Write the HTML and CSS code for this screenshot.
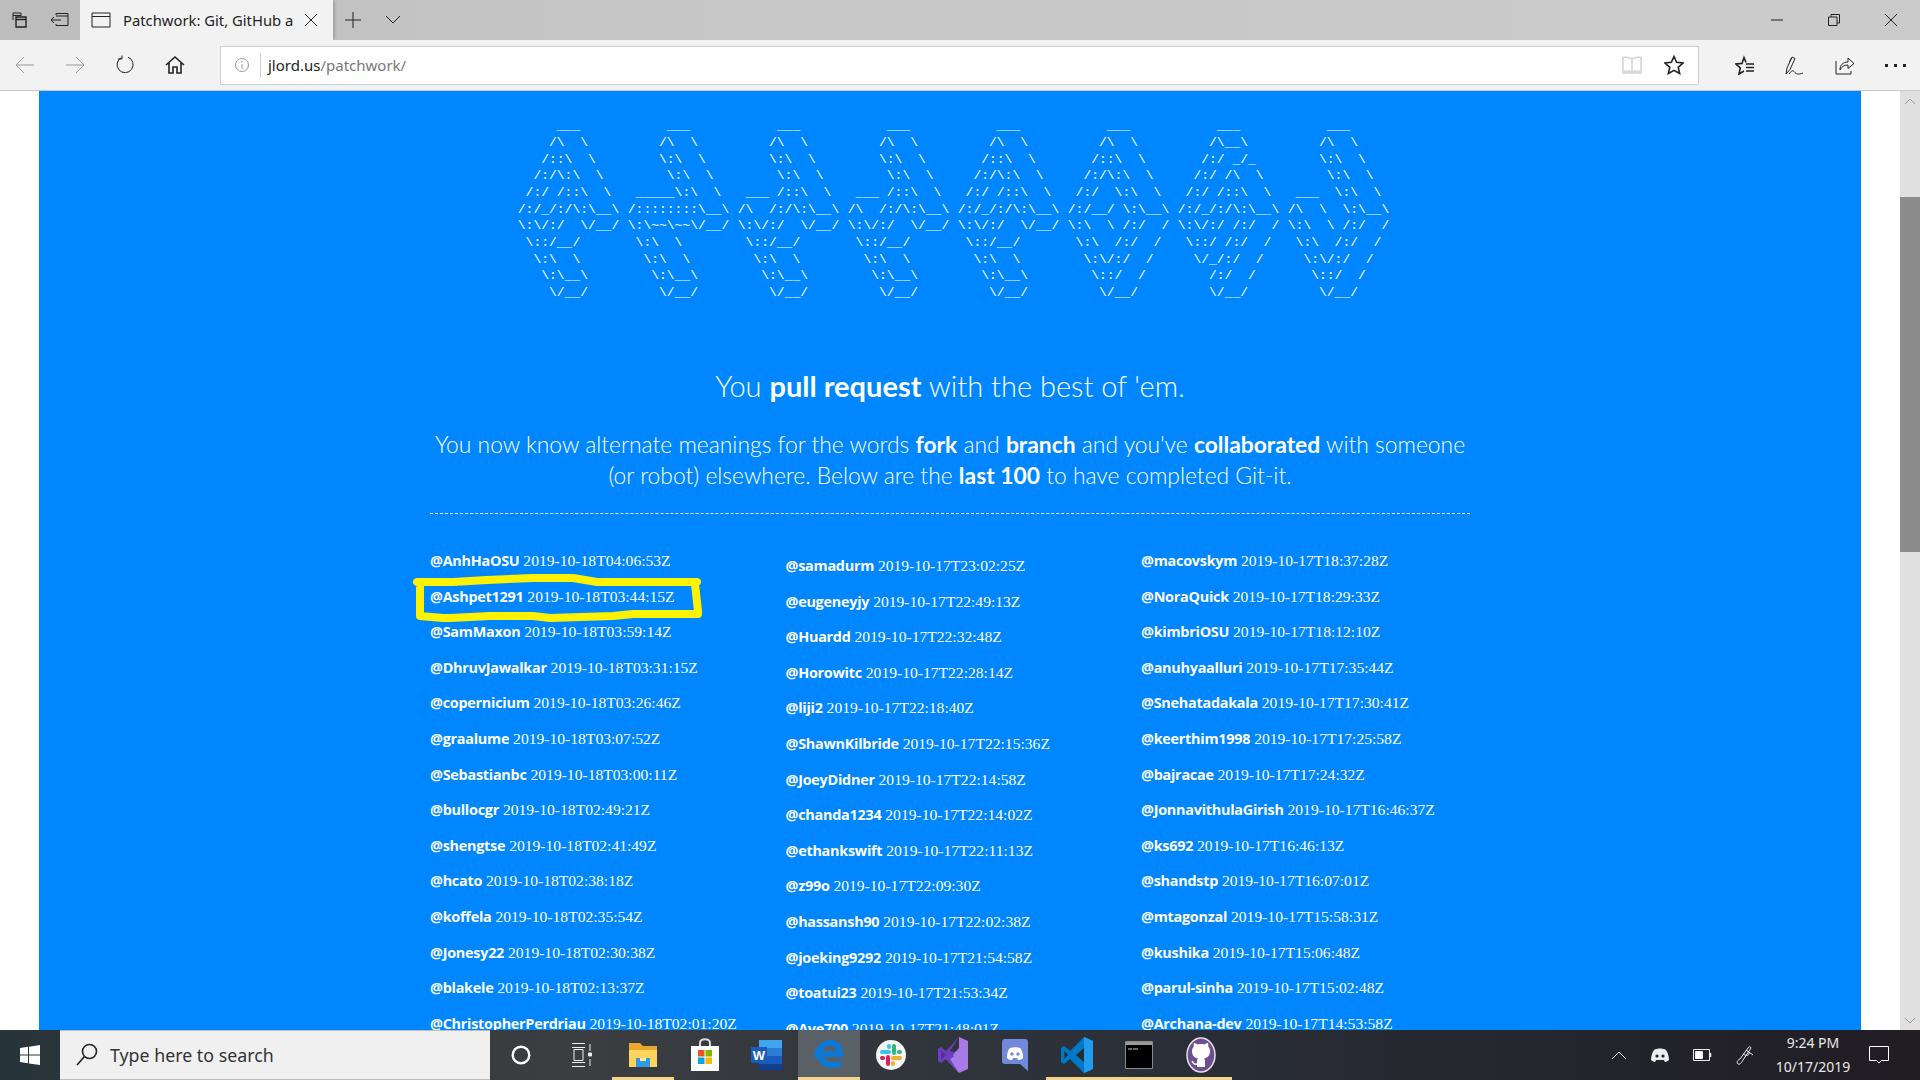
FILE: index.html
```html
<!DOCTYPE html>
<html lang="en">
<head>
    <meta charset="UTF-8">
    <title>Patchwork: Git, GitHub and you</title>
    <link rel="stylesheet" href="styles.css">
</head>
<body>
    <!-- browser chrome -->
    <div class="tabbar">
        <div class="tab-tools">
            <span class="tool"><svg width="20" height="20" viewBox="0 0 20 20" class="ic"><path d="M3 10V3h8v3M3 5.500h8"/><path d="M6 7h10v10H6zM6 9.500h10" stroke-width="1.4"/></svg></span>
            <span class="tool"><svg width="20" height="20" viewBox="0 0 20 20" class="ic"><path d="M6 5V3.500h12v12H6V14M6 6h12M1 10h10M4 7l-3 3 3 3"/></svg></span>
        </div>
        <div class="tab">
            <svg width="20" height="18" viewBox="0 0 20 18" class="ic"><path d="M1 2h18v14H1zM1 5.500h18"/></svg>
            <span class="tab-title">Patchwork: Git, GitHub a</span>
            <svg width="14" height="14" viewBox="0 0 14 14" class="ic tab-close"><path d="M1 1l12 12M13 1L1 13"/></svg>
        </div>
        <span class="tab-new"><svg width="16" height="16" viewBox="0 0 16 16" class="ic"><path d="M8 0v16M0 8h16"/></svg></span>
        <span class="tab-list"><svg width="16" height="10" viewBox="0 0 16 10" class="ic"><path d="M1 1l7 7 7-7"/></svg></span>
        <div class="win-btns">
            <svg width="12" height="2" viewBox="0 0 12 2" class="ic"><path d="M0 1h12"/></svg>
            <svg width="12" height="12" viewBox="0 0 12 12" class="ic"><path d="M.5 3h8.500v8.500H.5zM3 3V.5h8.500V9H9"/></svg>
            <svg width="12" height="12" viewBox="0 0 12 12" class="ic"><path d="M0 0l12 12M12 0L0 12"/></svg>
        </div>
    </div>
    <div class="toolbar">
        <span class="nav"><svg width="20" height="18" viewBox="0 0 20 18" class="ic dim"><path d="M19 9H1M9 1L1 9l8 8"/></svg></span>
        <span class="nav"><svg width="20" height="18" viewBox="0 0 20 18" class="ic dim"><path d="M1 9h18M11 1l8 8-8 8"/></svg></span>
        <span class="nav"><svg width="20" height="20" viewBox="0 0 20 20" class="ic"><path d="M6.500 2.500A8 8 0 1 0 13 2.200M7 .5v3.500H3"/></svg></span>
        <span class="nav"><svg width="20" height="20" viewBox="0 0 20 20" class="ic ic-bold"><path d="M1 10l9-8 9 8M4 8v10h4v-6h4v6h4V8"/></svg></span>
        <div class="address">
            <svg width="16" height="16" viewBox="0 0 16 16" class="ic dim info"><circle cx="8" cy="8" r="6.500"/><path d="M8 7v5M8 4v1.500"/></svg>
            <span class="addr-sep"></span>
            <span class="url">jlord.us<span class="url-path">/patchwork/</span></span>
            <svg width="20" height="20" viewBox="0 0 20 20" class="ic faint reader"><path d="M10 4C8 2.500 4 2 1 2.500V18h18V2.500C16 2 12 2.500 10 4zM10 4v13M1 17c3-1 7-1 9 0 2-1 6-1 9 0"/></svg>
            <svg width="20" height="20" viewBox="0 0 20 20" class="ic ic-bold star"><path d="M10 1.500l2.600 5.800 6.400.7-4.800 4.300 1.400 6.200L10 15.300l-5.600 3.200 1.400-6.200L1 8l6.400-.7z"/></svg>
        </div>
        <div class="tool-right">
            <span class="nav"><svg width="20" height="20" viewBox="0 0 20 20" class="ic ic-bold"><path d="M9 16l-5 3 1.300-6L1 9l6-.6L9 2.500l2 5M11 9h8M11 12.500h8M11 16h8"/></svg></span>
            <span class="nav"><svg width="20" height="20" viewBox="0 0 20 20" class="ic"><path d="M1 19l1-6L7 2l3 1.500-5 11zM6.500 3l-2 4M4 19c3-4 4-4 6-1.500s5 1.500 8 .5"/></svg></span>
            <span class="nav"><svg width="20" height="20" viewBox="0 0 20 20" class="ic"><path d="M1 6v13h15v-3M5 15c0-5 3-8 8-8V3l6 5.500-6 5V10c-4 0-6 1.500-8 5z"/></svg></span>
            <span class="nav dots"><i></i><i></i><i></i></span>
        </div>
    </div>

    <div class="viewport">
        <main class="page">
            <div class="art">
<pre>      ___
     /\  \
    /::\  \
   /:/\:\  \
  /:/ /::\  \
 /:/_/:/\:\__\
 \:\/:/  \/__/
  \::/__/
   \:\  \
    \:\__\
     \/__/</pre>
<pre>      ___
     /\  \
     \:\  \
      \:\  \
  _____\:\  \
 /::::::::\__\
 \:\~~\~~\/__/
  \:\  \
   \:\  \
    \:\__\
     \/__/</pre>
<pre>      ___
     /\  \
     \:\  \
      \:\  \
  ___ /::\  \
 /\  /:/\:\__\
 \:\/:/  \/__/
  \::/__/
   \:\  \
    \:\__\
     \/__/</pre>
<pre>      ___
     /\  \
     \:\  \
      \:\  \
  ___ /::\  \
 /\  /:/\:\__\
 \:\/:/  \/__/
  \::/__/
   \:\  \
    \:\__\
     \/__/</pre>
<pre>      ___
     /\  \
    /::\  \
   /:/\:\  \
  /:/ /::\  \
 /:/_/:/\:\__\
 \:\/:/  \/__/
  \::/__/
   \:\  \
    \:\__\
     \/__/</pre>
<pre>      ___
     /\  \
    /::\  \
   /:/\:\  \
  /:/  \:\  \
 /:/__/ \:\__\
 \:\  \ /:/  /
  \:\  /:/  /
   \:\/:/  /
    \::/  /
     \/__/</pre>
<pre>      ___
     /\__\
    /:/ _/_
   /:/ /\  \
  /:/ /::\  \
 /:/_/:/\:\__\
 \:\/:/ /:/  /
  \::/ /:/  /
   \/_/:/  /
     /:/  /
     \/__/</pre>
<pre>      ___
     /\  \
     \:\  \
      \:\  \
  ___  \:\  \
 /\  \  \:\__\
 \:\  \ /:/  /
  \:\  /:/  /
   \:\/:/  /
    \::/  /
     \/__/</pre>
            </div>

            <h2 class="lead">You <b>pull request</b> with the best of 'em.</h2>
            <p class="sub">You now know alternate meanings for the words <b>fork</b> and <b>branch</b> and you've <b>collaborated</b> with someone<br>(or robot) elsewhere. Below are the <b>last 100</b> to have completed Git-it.</p>
            <hr class="rule">

            <div class="people">
                <ul class="col">
                    <li><b>@AnhHaOSU</b> 2019-10-18T04:06:53Z</li>
                    <li class="marked"><b>@Ashpet1291</b> 2019-10-18T03:44:15Z
                        <svg class="scribble" width="300" height="56" viewBox="0 0 300 56"><path d="M5 11L41 11 75 9 121 7 161 7 185 11 285 11 283 13 286 40 286 43 221 43 201 45 138 47 121 45 78 45 38 47 31 47 8 45 8 13z"/></svg>
                    </li>
                    <li><b>@SamMaxon</b> 2019-10-18T03:59:14Z</li>
                    <li><b>@DhruvJawalkar</b> 2019-10-18T03:31:15Z</li>
                    <li><b>@copernicium</b> 2019-10-18T03:26:46Z</li>
                    <li><b>@graalume</b> 2019-10-18T03:07:52Z</li>
                    <li><b>@Sebastianbc</b> 2019-10-18T03:00:11Z</li>
                    <li><b>@bullocgr</b> 2019-10-18T02:49:21Z</li>
                    <li><b>@shengtse</b> 2019-10-18T02:41:49Z</li>
                    <li><b>@hcato</b> 2019-10-18T02:38:18Z</li>
                    <li><b>@koffela</b> 2019-10-18T02:35:54Z</li>
                    <li><b>@Jonesy22</b> 2019-10-18T02:30:38Z</li>
                    <li><b>@blakele</b> 2019-10-18T02:13:37Z</li>
                    <li><b>@ChristopherPerdriau</b> 2019-10-18T02:01:20Z</li>
                </ul>
                <ul class="col col-mid">
                    <li><b>@samadurm</b> 2019-10-17T23:02:25Z</li>
                    <li><b>@eugeneyjy</b> 2019-10-17T22:49:13Z</li>
                    <li><b>@Huardd</b> 2019-10-17T22:32:48Z</li>
                    <li><b>@Horowitc</b> 2019-10-17T22:28:14Z</li>
                    <li><b>@liji2</b> 2019-10-17T22:18:40Z</li>
                    <li><b>@ShawnKilbride</b> 2019-10-17T22:15:36Z</li>
                    <li><b>@JoeyDidner</b> 2019-10-17T22:14:58Z</li>
                    <li><b>@chanda1234</b> 2019-10-17T22:14:02Z</li>
                    <li><b>@ethankswift</b> 2019-10-17T22:11:13Z</li>
                    <li><b>@z99o</b> 2019-10-17T22:09:30Z</li>
                    <li><b>@hassansh90</b> 2019-10-17T22:02:38Z</li>
                    <li><b>@joeking9292</b> 2019-10-17T21:54:58Z</li>
                    <li><b>@toatui23</b> 2019-10-17T21:53:34Z</li>
                    <li><b>@Ave700</b> 2019-10-17T21:48:01Z</li>
                </ul>
                <ul class="col">
                    <li><b>@macovskym</b> 2019-10-17T18:37:28Z</li>
                    <li><b>@NoraQuick</b> 2019-10-17T18:29:33Z</li>
                    <li><b>@kimbriOSU</b> 2019-10-17T18:12:10Z</li>
                    <li><b>@anuhyaalluri</b> 2019-10-17T17:35:44Z</li>
                    <li><b>@Snehatadakala</b> 2019-10-17T17:30:41Z</li>
                    <li><b>@keerthim1998</b> 2019-10-17T17:25:58Z</li>
                    <li><b>@bajracae</b> 2019-10-17T17:24:32Z</li>
                    <li><b>@JonnavithulaGirish</b> 2019-10-17T16:46:37Z</li>
                    <li><b>@ks692</b> 2019-10-17T16:46:13Z</li>
                    <li><b>@shandstp</b> 2019-10-17T16:07:01Z</li>
                    <li><b>@mtagonzal</b> 2019-10-17T15:58:31Z</li>
                    <li><b>@kushika</b> 2019-10-17T15:06:48Z</li>
                    <li><b>@parul-sinha</b> 2019-10-17T15:02:48Z</li>
                    <li><b>@Archana-dev</b> 2019-10-17T14:53:58Z</li>
                </ul>
            </div>
        </main>
        <div class="scrollbar">
            <span class="sb-btn"><svg width="12" height="7" viewBox="0 0 12 7" class="ic dim"><path d="M1 6l5-5 5 5"/></svg></span>
            <span class="sb-gap"></span>
            <span class="sb-thumb"></span>
            <span class="sb-rest"></span>
            <span class="sb-btn"><svg width="12" height="7" viewBox="0 0 12 7" class="ic dim"><path d="M1 1l5 5 5-5"/></svg></span>
        </div>
    </div>

    <!-- windows taskbar -->
    <footer class="taskbar">
        <span class="start"><svg width="20" height="20" viewBox="0 0 20 20"><path fill="#fff" d="M0 3l8-1.200v7.700H0zM9 1.700L20 0v9.500H9zM0 10.500h8v7.700L0 17zM9 10.500h11V20L9 18.400z"/></svg></span>
        <div class="search">
            <svg width="22" height="24" viewBox="0 0 22 24" class="ic ic-bold"><circle cx="13.500" cy="8.500" r="7"/><path d="M8.500 13.500L1 22"/></svg>
            <span>Type here to search</span>
        </div>
        <span class="sys"><svg width="20" height="20" viewBox="0 0 20 20" fill="none" stroke="#fff" stroke-width="2.400"><circle cx="10" cy="10" r="8.300"/></svg></span>
        <span class="sys"><svg width="20" height="24" viewBox="0 0 20 24" fill="none" stroke="#eee"><path d="M0 .5h13M0 23.500h13M2 6.500h9v11H2zM0 4.500h13M0 19.500h13M18 1v7M18 16v7"/><path d="M16.500 10h3v3h-3z" fill="#eee"/></svg></span>
        <span class="app running"><svg width="32" height="30" viewBox="0 0 32 30"><path fill="#e8a92c" d="M2 3h11l3 3h14v21H2z"/><path fill="#ffd35c" d="M2 10h28v17H2z"/><path fill="#2f9be0" d="M9 18h14v9H9z"/><path fill="#ffe9a6" d="M13 18h6v3h-6z"/></svg></span>
        <span class="app"><svg width="30" height="34" viewBox="0 0 30 34"><path fill="none" stroke="#ddd" stroke-width="2" d="M10 8V5c0-5 10-5 10 0v3"/><path fill="#fff" d="M1 8h28v25H1z"/><path fill="#f25022" d="M8 12h6.500v6.500H8z"/><path fill="#7fba00" d="M15.500 12H22v6.500h-6.500z"/><path fill="#00a4ef" d="M8 19.500h6.500V26H8z"/><path fill="#ffb900" d="M15.500 19.500H22V26h-6.500z"/></svg></span>
        <span class="app"><svg width="32" height="32" viewBox="0 0 32 32"><path fill="#41a5ee" d="M8 1h23v8H8z"/><path fill="#2b7cd3" d="M8 9h23v8H8z"/><path fill="#185abd" d="M8 17h23v8H8z"/><path fill="#103f91" d="M8 25h23v6H8z"/><path fill="#1a5cb8" d="M0 8h16v16H0z"/><text x="8" y="21" class="word-w">W</text></svg></span>
        <span class="app active running"><svg width="30" height="32" viewBox="0 0 30 32"><path fill="none" stroke="#0b78d7" stroke-width="6" d="M3 19C3 9 10 4 16 4c7 0 10 5 10 11H6M6 15c0 9 10 14 21 9"/></svg></span>
        <span class="app"><svg width="30" height="30" viewBox="0 0 30 30"><circle cx="15" cy="15" r="15" fill="#f5f5f5"/><g stroke-width="4" stroke-linecap="round"><path stroke="#36c5f0" d="M6 12h7M13 6v1"/><path stroke="#2eb67d" d="M18 6v7M24 12h-1"/><path stroke="#ecb22e" d="M24 18h-7M17 24v-1"/><path stroke="#e01e5a" d="M12 24v-7M6 18h1"/></g></svg></span>
        <span class="app"><svg width="30" height="36" viewBox="0 0 30 36"><path fill="#a77ae8" d="M21 0l9 4v28l-9 4-13-14 13-10z"/><path fill="#6e3dc0" d="M21 0L8 14 3 10 0 12v12l3 2 5-4 13 14-9-14 9-6-9-2z"/><path fill="#5c2d91" d="M3 13l5 5-5 5z"/><path fill="#a77ae8" d="M21 11l-6 7 6 7z"/></svg></span>
        <span class="app"><svg width="26" height="32" viewBox="0 0 26 32"><path fill="#7289da" d="M3 0h20a3 3 0 0 1 3 3v29l-8-7H3a3 3 0 0 1-3-3V3a3 3 0 0 1 3-3z"/><path fill="#fff" d="M5 19c0-5 1-8 3-10 3-1 7-1 10 0 2 2 3 5 3 10-2 2-4 2-5 2l-1-2h-4l-1 2c-1 0-3 0-5-2z"/><circle cx="10" cy="15" r="1.700" fill="#7289da"/><circle cx="16" cy="15" r="1.700" fill="#7289da"/></svg></span>
        <span class="app running"><svg width="32" height="36" viewBox="0 0 32 36"><path fill="#0078c8" d="M23 0l9 4v28l-9 4L9 22l-6 5-3-2v-14l3-2 6 5z"/><path fill="#1f9cf0" d="M23 0l9 4v28l-9 4z"/><path fill="#28292c" d="M23 11l-8 7 8 7zM3.500 14v8l3.500-4z"/></svg></span>
        <span class="app running"><svg width="28" height="28" viewBox="0 0 28 28"><path fill="#000" stroke="#8a8a8a" d="M.5.5h27v27H.5z"/><path fill="#9a9a9a" d="M1 1h26v3H1z"/><path fill="none" stroke="#ccc" d="M3 8h4M8 8h5"/></svg></span>
        <span class="app running"><svg width="30" height="36" viewBox="0 0 30 36"><ellipse cx="15" cy="18" rx="14" ry="17" fill="#6e4f8f" stroke="#e6e0ec" stroke-width="1.500"/><path fill="#fff" d="M15 7c-1.500 0-3 .3-3.500.5C10.500 6.500 9 6 8 6c-.5 1.300-.5 2.500-.2 3.500C6.500 11 6 12.500 6 14c0 5 3 7 6 7.500-.6.6-1 1.500-1 2.500v6h8v-6c0-1-.4-1.900-1-2.500 3-.5 6-2.500 6-7.500 0-1.500-.5-3-1.800-4.500.3-1 .3-2.200-.2-3.500-1 0-2.500.5-3.500 1.500C17.900 7.300 16.500 7 15 7z"/><path fill="none" stroke="#fff" stroke-width="1.500" d="M11 27c-3 1-4-1-5-3"/></svg></span>
        <div class="tray">
            <svg width="16" height="9" viewBox="0 0 16 9" class="ic tray-ic"><path d="M1 8l7-7 7 7"/></svg>
            <svg width="18" height="14" viewBox="0 0 18 14" class="tray-ic"><path fill="#eee" d="M3 2c3-2 9-2 12 0 2 3 3 6 3 10-2 1.500-3 2-4 2l-1-2H5l-1 2c-1 0-2-.5-4-2 0-4 1-7 3-10z"/><circle cx="6" cy="8" r="1.600" fill="#222"/><circle cx="12" cy="8" r="1.600" fill="#222"/></svg>
            <svg width="19" height="12" viewBox="0 0 19 12" class="ic tray-ic"><path d="M.5.5h16v11H.5z"/><path d="M17.500 4v4" stroke-width="1.500"/><path d="M2.500 2.500h7v7h-7z" fill="#fff"/></svg>
            <svg width="20" height="20" viewBox="0 0 20 20" class="ic tray-ic tray-pen"><path d="M2 19c-2-2 0-4 2-5l8-11c1-2 3-1 3 0l-8 12c-1 2-3 5-5 4zM10 5l7 5M7 9c3 2 6 2 6-1"/></svg>
            <div class="clock"><span>9:24 PM</span><span>10/17/2019</span></div>
            <svg width="20" height="19" viewBox="0 0 20 19" class="ic notify"><path d="M.5.5h19v14h-7l-2.500 2.500L7.500 14.500h-7z"/></svg>
        </div>
    </footer>
</body>
</html>
```

FILE: styles.css
```css
* {
    box-sizing: border-box;
}

html, body {
    margin: 0;
    height: 100%;
}

body {
    display: flex;
    flex-direction: column;
    height: 1080px;
    overflow: hidden;
    font-family: "Lato", sans-serif;
    background-color: #ffffff;
}

/* shared icon strokes */
.ic {
    fill: none;
    stroke: #222222;
    stroke-width: 1;
}

.ic-bold {
    stroke-width: 1.6;
}

.ic.dim {
    stroke: #9b9b9b;
}

.ic.faint {
    stroke: #d6d6d6;
    stroke-width: 1.6;
}

/* tab strip */
.tabbar {
    display: flex;
    align-items: center;
    height: 40px;
    flex-shrink: 0;
    background: linear-gradient(90deg, #bdbdbd 0%, #c6c6c6 30%, #cbcbcb 100%);
}

.tab-tools {
    display: flex;
    width: 80px;
    height: 40px;
}

.tool {
    display: flex;
    align-items: center;
    justify-content: center;
    width: 40px;
}

.tab {
    display: flex;
    align-items: center;
    width: 253px;
    height: 40px;
    padding-left: 11px;
    background-color: #f2f2f2;
    box-shadow: 2px 0 3px rgba(0, 0, 0, 0.18);
}

.tab-title {
    width: 170px;
    margin-left: 12px;
    font-family: "Noto Sans", sans-serif;
    font-size: 14.800px;
    color: #222222;
    white-space: nowrap;
}

.tab-close {
    margin-left: 11px;
}

.tab-new {
    display: flex;
    margin-left: 12px;
}

.tab-list {
    display: flex;
    margin-left: 24px;
}

.win-btns {
    display: flex;
    align-items: center;
    gap: 45px;
    margin-left: auto;
    padding-right: 23px;
}

/* address row */
.toolbar {
    display: flex;
    align-items: center;
    height: 51px;
    flex-shrink: 0;
    background-color: #f2f2f2;
    border-bottom: 1px solid #c8c8c8;
}

.nav {
    display: flex;
    align-items: center;
    justify-content: center;
    width: 50px;
}

.address {
    display: flex;
    align-items: center;
    width: 1479px;
    height: 39px;
    margin-left: 20px;
    padding-left: 13px;
    background-color: #ffffff;
    border: 1px solid #cfcfcf;
}

.addr-sep {
    width: 1px;
    height: 25px;
    margin-left: 10px;
    background-color: #d0d0d0;
}

.url {
    margin-left: 7px;
    font-family: "Noto Sans", sans-serif;
    font-size: 15px;
    color: #222222;
}

.url-path {
    color: #777777;
}

.reader {
    margin-left: auto;
}

.star {
    margin-left: 22px;
    margin-right: 14px;
}

.tool-right {
    display: flex;
    margin-left: 21px;
}

.dots {
    gap: 6px;
}

.dots i {
    width: 3px;
    height: 3px;
    background-color: #222222;
}

/* page area */
.viewport {
    display: flex;
    flex: 1;
    min-height: 0;
    overflow: hidden;
}

.page {
    width: 1822px;
    margin-left: 39px;
    margin-right: 39px;
    padding-top: 27px;
    overflow: hidden;
    color: #ffffff;
    background-color: #0087ff;
}

/* stretched a little, the line pitch of the reference is not a whole pixel */
.art {
    display: flex;
    justify-content: center;
    transform: scaleY(1.04);
    transform-origin: top;
}

.art pre {
    width: 110px;
    margin: 0;
    font-family: "Liberation Mono", monospace;
    font-size: 13px;
    line-height: 16px;
}

.lead {
    margin: 74px 0 0;
    font-size: 29px;
    font-weight: 300;
    line-height: 36px;
    text-align: center;
}

.lead b,
.sub b {
    font-weight: 700;
}

.sub {
    margin: 25px 0 0;
    font-size: 22.850px;
    font-weight: 300;
    line-height: 31px;
    text-align: center;
}

.rule {
    width: 1040px;
    height: 0;
    margin: 22px auto 0;
    border: 0;
    border-top: 1px dashed #ffffff;
}

.people {
    display: flex;
    margin-left: 391px;
    padding-top: 35px;
}

.col {
    width: 355.500px;
    margin: 0;
    padding: 0;
    list-style: none;
}

.col-mid {
    padding-top: 5px;
}

.col li {
    position: relative;
    height: 35.600px;
    font-family: "Liberation Serif", serif;
    font-size: 15.600px;
    line-height: 24px;
    white-space: nowrap;
}

.col li b {
    font-family: "Open Sans", sans-serif;
    font-size: 14.400px;
    font-weight: 700;
    letter-spacing: -0.250px;
}

/* marker drawn over the screenshot */
.scribble {
    position: absolute;
    left: -18px;
    top: -14px;
    fill: none;
    stroke: #fff200;
    stroke-width: 8;
    stroke-linejoin: round;
}

/* scrollbar */
.scrollbar {
    display: flex;
    flex-direction: column;
    width: 20px;
    background-color: #e0e0e0;
}

.sb-btn {
    display: flex;
    align-items: center;
    justify-content: center;
    height: 20px;
}

.sb-gap {
    height: 86px;
}

.sb-thumb {
    height: 355px;
    background-color: #8c8c8c;
}

.sb-rest {
    flex: 1;
}

/* taskbar */
.taskbar {
    display: flex;
    align-items: center;
    height: 50px;
    flex-shrink: 0;
    background: linear-gradient(90deg, #27343a 0%, #3b3e41 30%, #2a2f38 60%, #201d23 100%);
}

.start {
    display: flex;
    align-items: center;
    justify-content: center;
    width: 60px;
    height: 50px;
}

.search {
    display: flex;
    align-items: center;
    gap: 12px;
    width: 430px;
    height: 50px;
    padding-left: 16px;
    font-family: "Noto Sans", sans-serif;
    font-size: 17.800px;
    color: #333333;
    background-color: #f0f0f0;
    border-top: 1px solid #bdbdbd;
    border-bottom: 1px solid #bdbdbd;
}

.sys {
    display: flex;
    align-items: center;
    justify-content: center;
    width: 61px;
    height: 50px;
}

.app {
    display: flex;
    align-items: center;
    justify-content: center;
    width: 62px;
    height: 50px;
}

.running {
    box-shadow: inset 0 -3px 0 0 #f5d48a;
}

.active {
    background-color: #5a6166;
}

.word-w {
    font-family: "Liberation Sans", sans-serif;
    font-size: 13px;
    font-weight: 700;
    fill: #ffffff;
    text-anchor: middle;
}

.tray {
    display: flex;
    align-items: center;
    margin-left: auto;
    height: 50px;
}

.ic.tray-ic {
    stroke: #eeeeee;
}

.tray-ic {
    margin-right: 24px;
}

.tray-pen {
    margin-right: 9px;
}

.clock {
    display: flex;
    flex-direction: column;
    align-items: center;
    gap: 2px;
    width: 96px;
    font-family: "Noto Sans", sans-serif;
    font-size: 14px;
    line-height: 22px;
    color: #e8e8e8;
}

.ic.notify {
    stroke: #ffffff;
    margin-left: 8px;
    margin-right: 31px;
}
```
